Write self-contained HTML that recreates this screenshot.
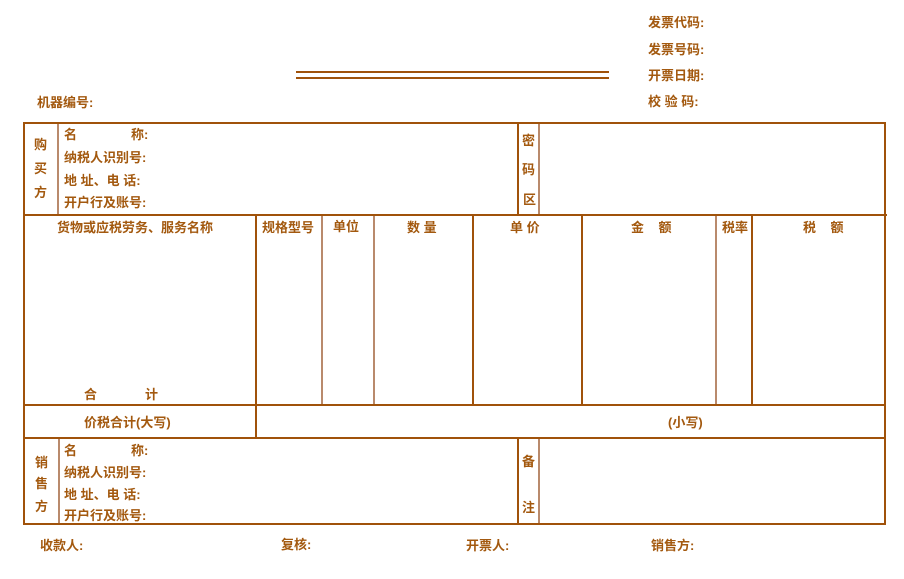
<!DOCTYPE html>
<html><head><meta charset="utf-8"><style>
html,body{margin:0;padding:0;background:#fff;}
body{width:904px;height:579px;position:relative;overflow:hidden;font-family:"Liberation Sans","Noto Sans CJK SC",sans-serif;font-size:13px;color:#a3590f;}
.t{position:absolute;white-space:pre;line-height:14px;font-weight:bold;transform:translateY(2px);}
.h{position:absolute;height:2px;background:#a0520a;}
.v{position:absolute;width:2px;background:#a0520a;}
.vl{position:absolute;width:2px;background:#b98a6c;}
</style></head><body>
<div class="t" style="left:648px;top:14px">发票代码:</div>
<div class="t" style="left:648px;top:41px">发票号码:</div>
<div class="t" style="left:648px;top:67px">开票日期:</div>
<div class="t" style="left:648px;top:93px">校 验 码:</div>
<div class="t" style="left:37px;top:94px">机器编号:</div>
<div class="h" style="left:296px;top:71px;width:313px"></div>
<div class="h" style="left:296px;top:77px;width:313px"></div>

<div class="h" style="left:23px;top:122px;width:863px"></div>
<div class="h" style="left:23px;top:523px;width:863px"></div>
<div class="v" style="left:23px;top:122px;height:403px"></div>
<div class="v" style="left:884px;top:122px;height:403px"></div>
<div class="h" style="left:23px;top:214px;width:864px"></div>
<div class="h" style="left:23px;top:404px;width:863px"></div>
<div class="h" style="left:23px;top:437px;width:863px"></div>

<div class="vl" style="left:57px;top:124px;height:90px"></div>
<div class="v" style="left:517px;top:124px;height:90px"></div>
<div class="vl" style="left:538px;top:124px;height:90px"></div>
<div class="t" style="left:34px;top:136px">购</div>
<div class="t" style="left:34px;top:160px">买</div>
<div class="t" style="left:34px;top:184px">方</div>
<div class="t" style="left:64px;top:126px">名</div>
<div class="t" style="left:131px;top:126px">称:</div>
<div class="t" style="left:64px;top:149px">纳税人识别号:</div>
<div class="t" style="left:64px;top:172px">地 址、电 话:</div>
<div class="t" style="left:64px;top:194px">开户行及账号:</div>
<div class="t" style="left:522px;top:132px">密</div>
<div class="t" style="left:522px;top:161px">码</div>
<div class="t" style="left:523px;top:191px">区</div>

<div class="v" style="left:255px;top:216px;height:222px"></div>
<div class="vl" style="left:321px;top:216px;height:188px"></div>
<div class="vl" style="left:373px;top:216px;height:188px"></div>
<div class="v" style="left:472px;top:216px;height:188px"></div>
<div class="v" style="left:581px;top:216px;height:188px"></div>
<div class="vl" style="left:715px;top:216px;height:188px"></div>
<div class="v" style="left:751px;top:216px;height:188px"></div>
<div class="t" style="left:57px;top:219px">货物或应税劳务、服务名称</div>
<div class="t" style="left:262px;top:219px">规格型号</div>
<div class="t" style="left:333px;top:218px">单位</div>
<div class="t" style="left:407px;top:219px">数 量</div>
<div class="t" style="left:510px;top:219px">单 价</div>
<div class="t" style="left:631px;top:219px">金    额</div>
<div class="t" style="left:722px;top:219px">税率</div>
<div class="t" style="left:803px;top:219px">税    额</div>
<div class="t" style="left:84px;top:386px">合</div>
<div class="t" style="left:145px;top:386px">计</div>

<div class="t" style="left:84px;top:414px">价税合计(大写)</div>
<div class="t" style="left:668px;top:414px">(小写)</div>

<div class="vl" style="left:58px;top:439px;height:84px"></div>
<div class="v" style="left:517px;top:439px;height:84px"></div>
<div class="vl" style="left:538px;top:439px;height:84px"></div>
<div class="t" style="left:35px;top:454px">销</div>
<div class="t" style="left:35px;top:475px">售</div>
<div class="t" style="left:35px;top:498px">方</div>
<div class="t" style="left:64px;top:442px">名</div>
<div class="t" style="left:131px;top:442px">称:</div>
<div class="t" style="left:64px;top:464px">纳税人识别号:</div>
<div class="t" style="left:64px;top:486px">地 址、电 话:</div>
<div class="t" style="left:64px;top:507px">开户行及账号:</div>
<div class="t" style="left:522px;top:453px">备</div>
<div class="t" style="left:522px;top:499px">注</div>

<div class="t" style="left:40px;top:537px">收款人:</div>
<div class="t" style="left:281px;top:536px">复核:</div>
<div class="t" style="left:466px;top:537px">开票人:</div>
<div class="t" style="left:651px;top:537px">销售方:</div>
</body></html>
